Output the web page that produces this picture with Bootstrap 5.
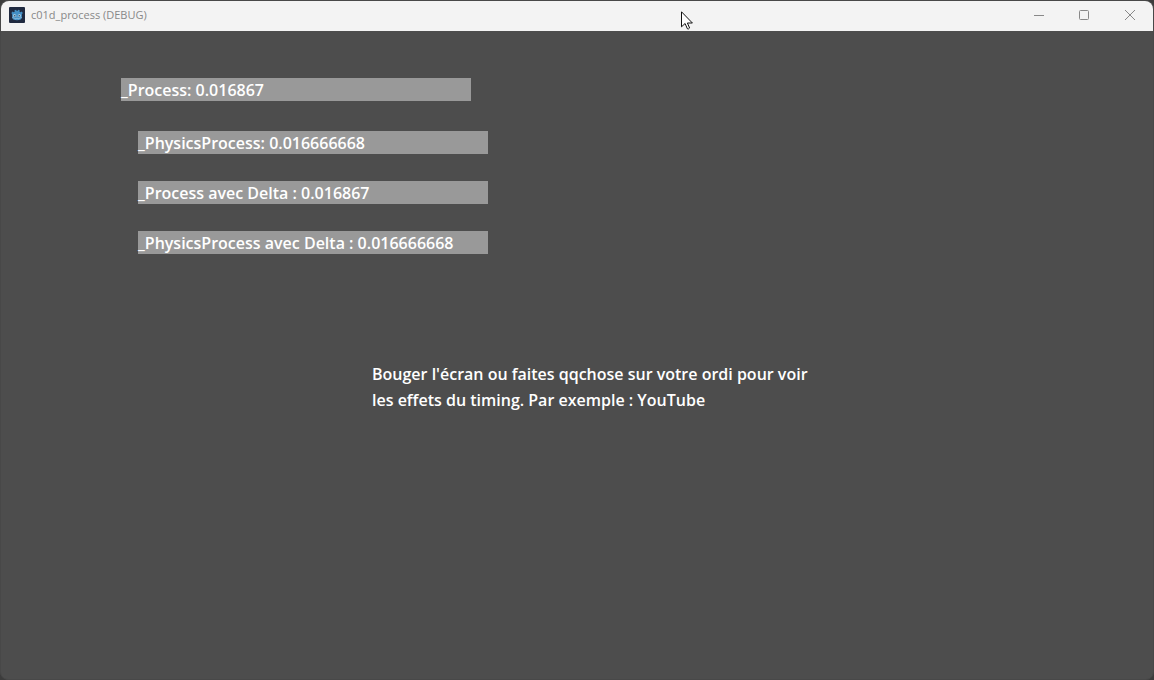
<!DOCTYPE html>
<html lang="fr">
<head>
<meta charset="utf-8">
<meta name="viewport" content="width=device-width, initial-scale=1">
<title>c01d_process (DEBUG)</title>
<link href="https://cdn.jsdelivr.net/npm/bootstrap@5.3.0/dist/css/bootstrap.min.css" rel="stylesheet">
<style>
  body { background: #3c3c3c; font-family: "Open Sans", "Noto Sans", sans-serif; }
  .app-window { border: 1px solid #484848; border-radius: 8px; background: #4d4d4d; }
  .titlebar { height: 30px; background: #f3f3f3; color: #888; padding: 0 0 2px 8px; gap: 6px; border-radius: 8px 8px 0 0; }
  .app-title { font-size: 11px; line-height: 16px; font-weight: 400; }
  .win-btn { width: 46px; height: 28px; color: #888; background: none; }
  .win-btn:hover { background: #e5e5e5; }
  .scene { color: #fff; font-size: 16px; font-weight: 600; padding: 47px 16px 16px 120px; }
  .readout { width: 350px; max-width: 100%; height: 23px; line-height: 24px; background: #999; white-space: nowrap; }
  .readouts { gap: 27px; margin-top: 30px; padding-left: 17px; }
  .hint { width: 450px; max-width: 100%; line-height: 26px; margin: 107px 0 0 251px; }
  .pointer { left: 59%; top: 10px; pointer-events: none; }
</style>
</head>
<body>
<div class="app-window d-flex flex-column min-vh-100 position-relative">
  <header class="titlebar d-flex align-items-center">
    <svg width="16" height="16" viewBox="0 0 16 16" aria-hidden="true">
      <rect width="16" height="16" rx="1" fill="#202a40"/>
      <path d="M2.400 6 3.500 4.600l1.200.7 1-.5-.2-1.600 1.600-.5.7 1.200h.6l.7-1.200 1.600.5-.2 1.600 1 .5 1.200-.7L13.800 6l-.9 1.300v3.500Q12.200 13.300 8 13.300T3.100 10.800V7.300Z" fill="#438fc5"/>
      <circle cx="5.500" cy="8.600" r="1.500" fill="#a9cde5"/>
      <circle cx="10.500" cy="8.600" r="1.500" fill="#a9cde5"/>
      <circle cx="5.700" cy="8.700" r=".8" fill="#34506b"/>
      <circle cx="10.300" cy="8.700" r=".8" fill="#34506b"/>
      <path d="M8 8.300v1.500M3.200 10.600l2.500.4.300.9h1.200l.3-.8h1l.3.8H10l.3-.9 2.500-.4" fill="none" stroke="#a9cde5" stroke-width=".6"/>
    </svg>
    <h1 class="app-title mb-0">c01d_process (DEBUG)</h1>
    <div class="d-flex ms-auto">
      <button type="button" class="win-btn border-0 p-0 d-flex align-items-center justify-content-center" aria-label="Réduire">
        <svg width="12" height="12" viewBox="0 0 12 12"><path d="M2 6.500h10" stroke="currentColor"/></svg>
      </button>
      <button type="button" class="win-btn border-0 p-0 d-flex align-items-center justify-content-center" aria-label="Agrandir">
        <svg width="12" height="12" viewBox="0 0 12 12"><rect x="1.500" y="1.500" width="9" height="9" rx="1" fill="none" stroke="currentColor"/></svg>
      </button>
      <button type="button" class="win-btn border-0 p-0 d-flex align-items-center justify-content-center" aria-label="Fermer">
        <svg width="12" height="12" viewBox="0 0 12 12"><path d="m1 1 10 10M11 1 1 11" stroke="currentColor"/></svg>
      </button>
    </div>
  </header>
  <main class="scene flex-grow-1">
    <div class="readout">_Process: 0.016867</div>
    <div class="readouts d-flex flex-column">
      <div class="readout">_PhysicsProcess: 0.016666668</div>
      <div class="readout">_Process avec Delta : 0.016867</div>
      <div class="readout">_PhysicsProcess avec Delta : 0.016666668</div>
    </div>
    <p class="hint">Bouger l'écran ou faites qqchose sur votre ordi pour voir les effets du timing. Par exemple : YouTube</p>
  </main>
  <svg class="pointer position-absolute" width="12" height="19" viewBox="0 0 12 19" aria-hidden="true">
    <path d="M.5.800v15l3.600-3.300 2.300 5.300q1 .7 2.200-.8l-2.200-5h5Z" fill="#fff" stroke="#111" stroke-linejoin="round"/>
  </svg>
</div>
<script src="https://cdn.jsdelivr.net/npm/bootstrap@5.3.0/dist/js/bootstrap.bundle.min.js"></script>
</body>
</html>
